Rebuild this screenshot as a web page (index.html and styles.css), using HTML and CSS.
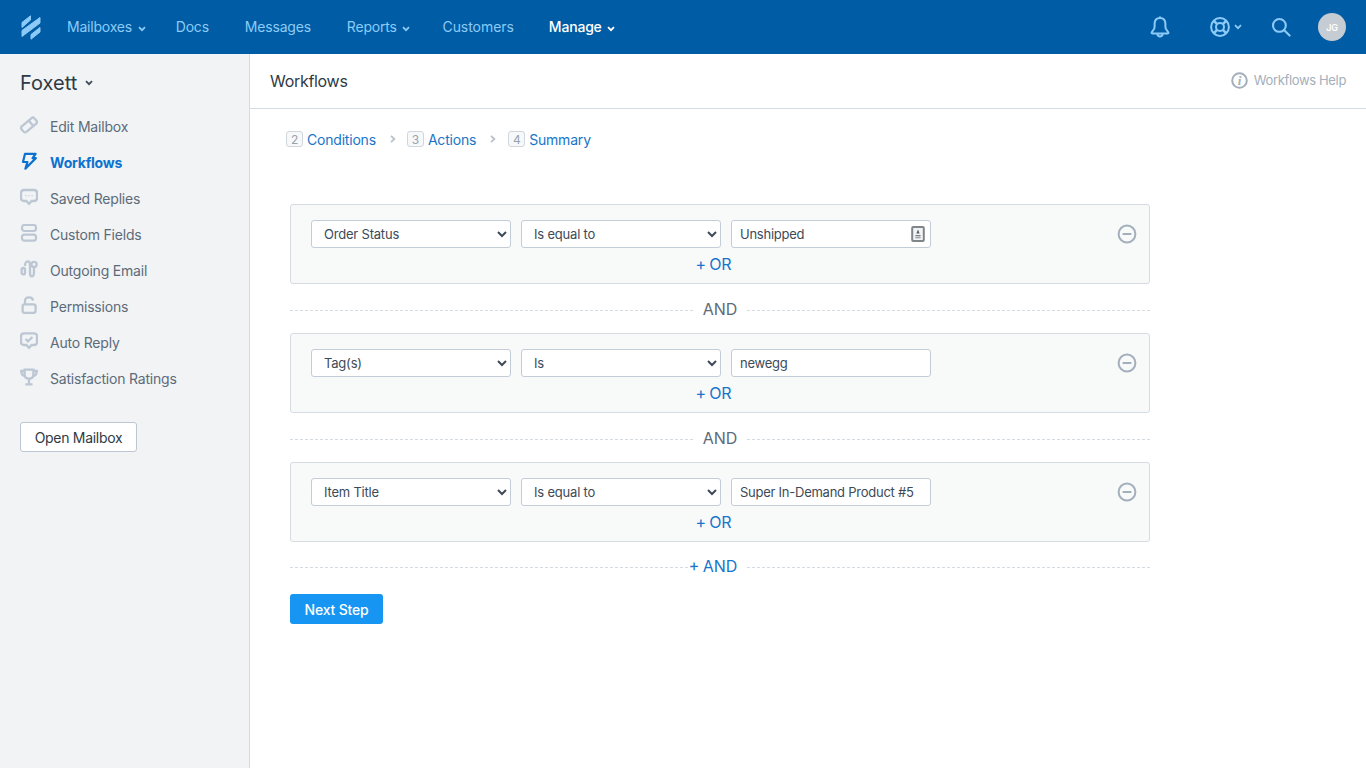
FILE: index.html
```html
<!DOCTYPE html>
<html lang="en">
<head>
  <meta charset="UTF-8">
  <title>Workflows</title>
  <link rel="stylesheet" href="styles.css">
</head>
<body>

  <!-- Top navigation -->
  <header class="topbar">
    <svg class="logo" width="20" height="25" viewBox="0 0 20 25" fill="#8ccbf7" stroke="#8ccbf7" stroke-linejoin="round">
      <path d="M1 7.5 L9.5 .8 L9.5 5 L1 12.5 Z"/>
      <path d="M1 15.5 L19 2.5 L19 8 L1 21.5 Z"/>
      <path d="M10 19.5 L19 12.5 L19 17 L10 24.2 Z"/>
    </svg>
    <nav class="nav">
      <a class="nav-item nav-mailboxes">Mailboxes <svg class="caret" width="8" height="6" viewBox="0 0 8 6"><path d="M1 1.2 L4 4.2 L7 1.2" /></svg></a>
      <a class="nav-item nav-docs">Docs</a>
      <a class="nav-item nav-messages">Messages</a>
      <a class="nav-item nav-reports">Reports <svg class="caret" width="8" height="6" viewBox="0 0 8 6"><path d="M1 1.2 L4 4.2 L7 1.2" /></svg></a>
      <a class="nav-item nav-customers">Customers</a>
      <a class="nav-item active">Manage <svg class="caret" width="8" height="6" viewBox="0 0 8 6"><path d="M1 1.2 L4 4.2 L7 1.2" /></svg></a>
    </nav>
    <div class="top-icons">
      <svg class="icon-bell" width="20" height="22" viewBox="0 0 20 22" fill="none" stroke="#8ccbf7" stroke-width="2">
        <path d="M10 2 C6 2 4.6 5 4.6 8 L4.6 11 C4.6 14 2 15 1.6 16.6 Q1.5 17.4 2.5 17.4 L17.5 17.4 Q18.5 17.4 18.4 16.6 C18 15 15.4 14 15.4 11 L15.4 8 C15.4 5 14 2 10 2 Z"/>
        <path d="M10 .5 L10 2"/>
        <path d="M7.4 17.6 Q7.6 20.4 10 20.4 Q12.4 20.4 12.6 17.6"/>
      </svg>
      <div class="help-menu">
        <svg width="20" height="20" viewBox="0 0 20 20" fill="none" stroke="#8ccbf7">
          <circle cx="10" cy="10" r="8.9" stroke-width="2"/>
          <circle cx="10" cy="10" r="4" stroke-width="2"/>
          <path d="M3.8 3.8 L7.2 7.2 M16.2 3.8 L12.8 7.2 M3.8 16.2 L7.2 12.8 M16.2 16.2 L12.8 12.8" stroke-width="2.6"/>
        </svg>
        <svg class="caret" width="8" height="6" viewBox="0 0 8 6"><path d="M1 1.2 L4 4.2 L7 1.2" /></svg>
      </div>
      <svg class="icon-search" width="20" height="20" viewBox="0 0 20 20" fill="none" stroke="#8ccbf7" stroke-width="2.1">
        <circle cx="8.4" cy="8.4" r="6.4"/>
        <path d="M13 13 L18.6 18.6" stroke-linecap="round"/>
      </svg>
      <div class="avatar">JG</div>
    </div>
  </header>

  <div class="main">
    <!-- Sidebar -->
    <aside class="sidebar">
      <h2 class="mailbox-name">Foxett <svg width="8" height="6" viewBox="0 0 8 6" fill="none" stroke="#3d4a57" stroke-width="1.8"><path d="M1 1.2 L4 4.2 L7 1.2"/></svg></h2>
      <ul class="side-menu">
        <li>
          <svg width="18" height="18" viewBox="0 0 18 18" fill="none" stroke="#bcc7d3" stroke-width="2.3"><g transform="rotate(-40 9 9)"><rect x="0.6" y="5.4" width="16.8" height="7.2" rx="2"/><path d="M11.6 5.4 L11.6 12.6"/></g></svg>
          Edit Mailbox
        </li>
        <li class="active">
          <svg width="18" height="18" viewBox="0 0 18 18" fill="none" stroke="#0b72cf" stroke-width="2.2" stroke-linejoin="round"><path d="M5 1.8 L15.6 1.8 L12.6 6.2 L15.8 6.2 L5.4 16.6 L7.4 10 L3 10 Z"/></svg>
          Workflows
        </li>
        <li>
          <svg width="18" height="18" viewBox="0 0 18 18" fill="none" stroke="#bcc7d3" stroke-width="2.3"><path d="M4 2 L14 2 Q17 2 17 5 L17 10 Q17 13 14 13 L11.6 13 L9 15.8 L6.4 13 L4 13 Q1 13 1 10 L1 5 Q1 2 4 2 Z"/><path d="M5.4 7.6 L6.4 7.6 M8.5 7.6 L9.5 7.6 M11.6 7.6 L12.6 7.6" stroke-width="1.4"/></svg>
          Saved Replies
        </li>
        <li>
          <svg width="18" height="18" viewBox="0 0 18 18" fill="none" stroke="#bcc7d3" stroke-width="2.2"><rect x="2" y="1" width="14" height="6" rx="2.4"/><rect x="2" y="10.6" width="14" height="6" rx="2.4"/></svg>
          Custom Fields
        </li>
        <li>
          <svg width="18" height="18" viewBox="0 0 18 18" fill="none" stroke="#bcc7d3" stroke-width="2.3"><rect x="1.6" y="8" width="3.4" height="6.4" rx="1.7"/><path d="M5 6 Q5 1.4 8 1.4 Q10 1.4 10 5 L10 13 Q10 16.4 12 16.4 Q14 16.4 14 11.5 L14 8"/><circle cx="14" cy="4.4" r="2.6"/></svg>
          Outgoing Email
        </li>
        <li>
          <svg width="18" height="18" viewBox="0 0 18 18" fill="none" stroke="#bcc7d3" stroke-width="2.3"><rect x="2.6" y="8.4" width="13" height="8.4" rx="2"/><path d="M5 8 L5 5 Q5 1.4 9 1.4 Q12.6 1.4 13 4.6"/></svg>
          Permissions
        </li>
        <li>
          <svg width="18" height="18" viewBox="0 0 18 18" fill="none" stroke="#bcc7d3" stroke-width="2.3"><path d="M4 1.4 L14 1.4 Q17 1.4 17 4.4 L17 10 Q17 13 14 13 L11.6 13 L9 15.8 L6.4 13 L4 13 Q1 13 1 10 L1 4.4 Q1 1.4 4 1.4 Z"/><path d="M5.6 7 L8 9.4 L12.4 5"/></svg>
          Auto Reply
        </li>
        <li>
          <svg width="18" height="18" viewBox="0 0 18 18" fill="none" stroke="#bcc7d3" stroke-width="2.3"><path d="M4.6 1.6 L13.4 1.6 L13.4 6.4 Q13.4 10.6 9 10.6 Q4.6 10.6 4.6 6.4 Z"/><path d="M4.6 3 L1.2 3 Q1.2 7.6 5 8 M13.4 3 L16.8 3 Q16.8 7.6 13 8"/><path d="M9 10.6 L9 15.6 M5.4 16.4 L12.6 16.4"/></svg>
          Satisfaction Ratings
        </li>
      </ul>
      <button class="btn-open">Open Mailbox</button>
    </aside>

    <!-- Content -->
    <section class="content">
      <div class="page-header">
        <h1>Workflows</h1>
        <a class="help-link">
          <svg width="17" height="17" viewBox="0 0 17 17" fill="none"><circle cx="8.5" cy="8.5" r="7.3" stroke="#a3afbb" stroke-width="2"/><text x="8.5" y="12.6" text-anchor="middle" class="help-i">i</text></svg>
          Workflows Help
        </a>
      </div>

      <div class="steps">
        <span class="num">2</span><a>Conditions</a>
        <svg class="step-arrow" width="6" height="8" viewBox="0 0 6 8"><path d="M1 .8 L4.4 4 L1 7.2"/></svg>
        <span class="num">3</span><a>Actions</a>
        <svg class="step-arrow step-arrow-last" width="6" height="8" viewBox="0 0 6 8"><path d="M1 .8 L4.4 4 L1 7.2"/></svg>
        <span class="num">4</span><a>Summary</a>
      </div>

      <div class="builder">
        <div class="rule">
          <div class="rule-row">
            <select><option>Order Status</option></select>
            <select><option>Is equal to</option></select>
            <div class="value-box">
              <input type="text" value="Unshipped">
              <svg class="contact-card" width="14" height="16" viewBox="0 0 14 16"><rect x="1.2" y="1" width="11.6" height="14" rx="1" fill="#f1f3f5" stroke="#808589" stroke-width="2"/><path d="M7 3.6 L8.6 7.6 L5.4 7.6 Z" fill="#555b61"/><rect x="4.4" y="9" width="5.2" height="1.4" fill="#808589"/><rect x="4.4" y="11" width="5.2" height="1.4" fill="#a5a9ad"/></svg>
            </div>
            <svg class="remove" width="20" height="20" viewBox="0 0 20 20" fill="none" stroke="#a3afbb" stroke-width="2"><circle cx="10" cy="10" r="8.4"/><path d="M5.6 10 L14.4 10"/></svg>
          </div>
          <a class="add-or">+ OR</a>
        </div>

        <div class="divider"><span>AND</span></div>

        <div class="rule">
          <div class="rule-row">
            <select><option>Tag(s)</option></select>
            <select><option>Is</option></select>
            <div class="value-box"><input type="text" value="newegg"></div>
            <svg class="remove" width="20" height="20" viewBox="0 0 20 20" fill="none" stroke="#a3afbb" stroke-width="2"><circle cx="10" cy="10" r="8.4"/><path d="M5.6 10 L14.4 10"/></svg>
          </div>
          <a class="add-or">+ OR</a>
        </div>

        <div class="divider"><span>AND</span></div>

        <div class="rule">
          <div class="rule-row">
            <select><option>Item Title</option></select>
            <select><option>Is equal to</option></select>
            <div class="value-box"><input type="text" value="Super In-Demand Product #5"></div>
            <svg class="remove" width="20" height="20" viewBox="0 0 20 20" fill="none" stroke="#a3afbb" stroke-width="2"><circle cx="10" cy="10" r="8.4"/><path d="M5.6 10 L14.4 10"/></svg>
          </div>
          <a class="add-or">+ OR</a>
        </div>

        <div class="divider divider-add"><span>+ AND</span></div>

        <button class="btn-next">Next Step</button>
      </div>
    </section>
  </div>

</body>
</html>
```

FILE: styles.css
```css
* {
  margin: 0;
  padding: 0;
  box-sizing: border-box;
}

body {
  font-family: "Inter", "Liberation Sans", sans-serif;
  font-size: 14px;
  letter-spacing: -0.2px;
  color: #3d4a57;
  background-color: #fff;
  height: 768px;
  overflow: hidden;
}

/* Top navigation */
.topbar {
  display: flex;
  align-items: center;
  height: 54px;
  background-color: #005ca4;
  padding-left: 21px;
  padding-right: 20px;
}

.nav {
  display: flex;
  margin-left: 26px;
  padding-bottom: 2px;
}

.nav-item {
  font-size: 14px;
  color: #8ccbf7;
  white-space: nowrap;
}

.nav-mailboxes { margin-right: 30px; }
.nav-docs { margin-right: 36px; }
.nav-messages { margin-right: 36px; }
.nav-reports { margin-right: 32px; }
.nav-customers {
  letter-spacing: -0.05px;
  margin-right: 35px;
}

.nav-item.active {
  color: #fff;
  font-weight: 500;
}

.caret {
  fill: none;
  stroke: currentColor;
  stroke-width: 1.8;
  margin-left: 2px;
}

.top-icons {
  display: flex;
  align-items: center;
  margin-left: auto;
}

.help-menu {
  display: flex;
  align-items: center;
  color: #8ccbf7;
  margin-left: 40px;
}

.help-menu .caret {
  margin-left: 4px;
}

.icon-search {
  margin-left: 29px;
}

.avatar {
  width: 28px;
  height: 28px;
  border-radius: 50%;
  background-color: #c6ccd3;
  color: #fff;
  font-size: 9px;
  font-weight: 600;
  display: flex;
  align-items: center;
  justify-content: center;
  margin-left: 27px;
}

/* Layout */
.main {
  display: flex;
  height: 714px;
}

/* Sidebar */
.sidebar {
  width: 250px;
  flex-shrink: 0;
  background-color: #f1f3f5;
  border-right: 1px solid #d5dce1;
  padding: 16px 20px 0;
}

.mailbox-name {
  font-size: 20px;
  font-weight: 400;
  letter-spacing: 0;
  line-height: 26px;
  color: #2f3a45;
  margin-bottom: 12px;
}

.mailbox-name svg {
  vertical-align: 4px;
  margin-left: 2px;
}

.side-menu {
  list-style: none;
}

.side-menu li {
  display: flex;
  align-items: center;
  gap: 12px;
  height: 36px;
  color: #5d6b79;
}

.side-menu li svg {
  flex-shrink: 0;
  margin-top: -3px;
}

.side-menu li.active {
  color: #0b72cf;
  font-weight: 700;
}

.btn-open {
  margin-top: 26px;
  width: 117px;
  height: 30px;
  background-color: #fff;
  border: 1px solid #bcc7d3;
  border-radius: 3px;
  font-family: inherit;
  font-size: 14px;
  letter-spacing: -0.3px;
  color: #2f3a45;
}

/* Content */
.content {
  flex: 1;
}

.page-header {
  display: flex;
  align-items: center;
  justify-content: space-between;
  height: 55px;
  border-bottom: 1px solid #d5dce1;
  padding: 0 20px;
}

.page-header h1 {
  font-size: 16px;
  font-weight: 400;
  letter-spacing: -0.3px;
  color: #2f3a45;
}

.help-link {
  display: flex;
  align-items: center;
  gap: 6px;
  color: #a3afbb;
  font-size: 13px;
  letter-spacing: -0.35px;
  padding-bottom: 2px;
}

.help-i {
  font-family: "Liberation Serif", serif;
  font-size: 13px;
  font-style: italic;
  font-weight: 700;
  fill: #a3afbb;
}

.steps {
  display: flex;
  align-items: center;
  height: 22px;
  margin: 19px 0 0 36px;
  color: #1875c9;
}

.steps .num {
  display: flex;
  align-items: center;
  justify-content: center;
  width: 17px;
  height: 16px;
  border: 1px solid #cfd6dc;
  border-radius: 3px;
  background-color: #f6f8f9;
  color: #98a3ad;
  font-size: 12px;
  margin-right: 4px;
}

.step-arrow {
  fill: none;
  stroke: #b9c2ca;
  stroke-width: 1.8;
  margin: 0 11px 0 14px;
}

.step-arrow-last {
  margin-right: 12px;
}

.builder {
  width: 860px;
  margin: 54px 0 0 40px;
}

.rule {
  height: 80px;
  border: 1px solid #d5dce1;
  border-radius: 3px;
  background-color: #f8f9f9;
  padding: 15px 12px 0 20px;
  text-align: center;
}

.rule-row {
  display: flex;
  align-items: center;
  gap: 10px;
}

select {
  width: 200px;
  height: 28px;
  background-color: #fff;
  border: 1px solid #c3cdd7;
  border-radius: 3px;
  padding-left: 8px;
  font-family: inherit;
  font-size: 13px;
  letter-spacing: inherit;
  color: #3d4a57;
}

.value-box {
  position: relative;
  width: 200px;
}

.value-box input {
  width: 100%;
  height: 28px;
  background-color: #fff;
  border: 1px solid #c3cdd7;
  border-radius: 3px;
  padding: 0 8px;
  font-family: inherit;
  font-size: 13px;
  letter-spacing: -0.25px;
  color: #3d4a57;
}

.contact-card {
  position: absolute;
  right: 6px;
  top: 6px;
}

.remove {
  margin-left: auto;
}

.add-or {
  display: block;
  color: #1875c9;
  font-size: 16px;
  word-spacing: -1px;
  line-height: 20px;
  margin: 6px 0 0 -21px;
}

.divider {
  display: flex;
  align-items: center;
  justify-content: center;
  height: 49px;
  font-size: 16px;
  letter-spacing: 0;
  color: #5d6b79;
}

.divider::before,
.divider::after {
  content: "";
  flex: 1;
  border-top: 1px dashed #d5dce1;
  margin-top: 4px;
}

.divider span {
  padding: 0 10px;
}

.divider-add {
  color: #1875c9;
  word-spacing: -1px;
  margin-top: -1px;
}

.divider-add span {
  margin-left: -14px;
}

.btn-next {
  display: block;
  margin-top: 4px;
  width: 93px;
  height: 30px;
  background-color: #1795f2;
  border: none;
  border-radius: 3px;
  color: #fff;
  font-family: inherit;
  font-size: 14px;
  font-weight: 500;
  letter-spacing: -0.2px;
}
```
